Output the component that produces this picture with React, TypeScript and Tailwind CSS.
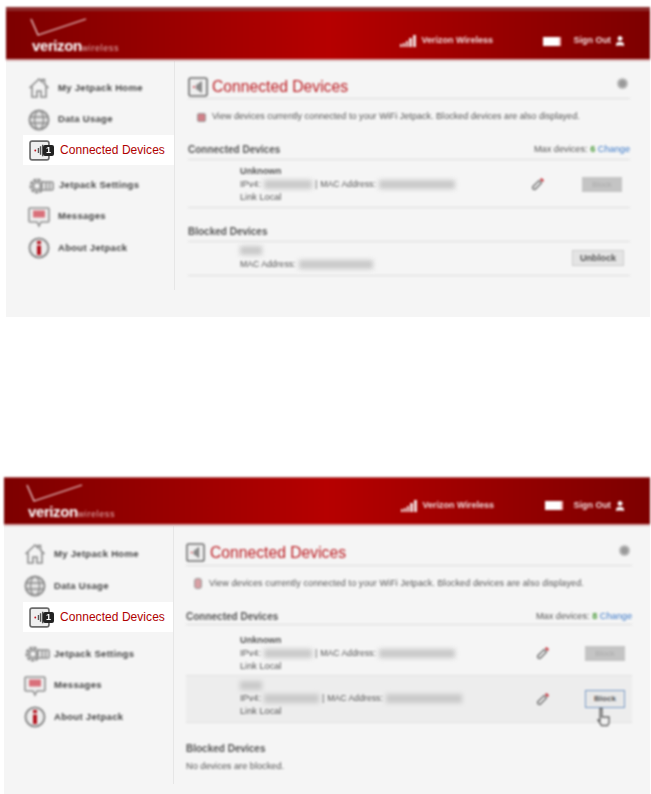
import React from "react";
import { User } from "lucide-react";

const Home = () => (
  <svg width="22" height="22" viewBox="0 0 22 22" fill="#f3f3f3" stroke="#8a8a8a" strokeWidth="1.6">
    <path d="M1.5 11 11 2l3 2.8V2.5h2.5v4.6L20.5 11M4 9.5V20h5v-6h4v6h5V9.5" />
  </svg>
);
const Globe = () => (
  <svg width="22" height="22" viewBox="0 0 22 22" fill="#e4e4e4" stroke="#8c8c8c" strokeWidth="1.4">
    <circle cx="11" cy="11" r="9.5" strokeWidth="2" />
    <ellipse cx="11" cy="11" rx="4.5" ry="9.5" fill="none" />
    <path d="M2 8h18M2 14h18" fill="none" />
  </svg>
);
const Gear = () => (
  <svg width="26" height="20" viewBox="0 0 26 20" fill="none" stroke="#8e8e8e" strokeWidth="1.6">
    <circle cx="9" cy="10" r="6" strokeDasharray="3 1" strokeWidth="3" />
    <circle cx="9" cy="10" r="3.5" fill="#f3f3f3" />
    <rect x="14" y="6" width="11" height="8" rx="1" fill="#f3f3f3" />
    <path d="M18 6v8M21.500 6v8" />
  </svg>
);
const Msg = () => (
  <svg width="22" height="22" viewBox="0 0 22 22">
    <path d="M2 2h18a1 1 0 0 1 1 1v12a1 1 0 0 1-1 1h-7l-2 4-2-4H2a1 1 0 0 1-1-1V3a1 1 0 0 1 1-1Z" fill="#efefef" stroke="#909090" strokeWidth="1.6" />
    <rect x="5" y="4.500" width="12" height="7" fill="#d9707a" />
  </svg>
);
const Info = () => (
  <svg width="22" height="22" viewBox="0 0 22 22">
    <circle cx="11" cy="11" r="9.500" fill="#ececec" stroke="#8a8a8a" strokeWidth="2" />
    <rect x="9" y="4" width="4" height="3" fill="#b3121d" />
    <rect x="9" y="8.500" width="4" height="9.500" fill="#b3121d" />
  </svg>
);
const DeviceIcon = ({ size = 20, wave = "#555" }: { size?: number; wave?: string }) => (
  <svg width={size} height={size} viewBox="0 0 20 20">
    <rect x="1" y="1" width="18" height="18" rx="2" fill="#efefef" stroke="#6b6b6b" strokeWidth="1.6" />
    <circle cx="6" cy="10" r="0.9" fill="#c01420" />
    <path d="M9 7.500v5M11 6v8M13 4.500v11" stroke={wave} strokeWidth="1.300" />
  </svg>
);
const Pencil = () => (
  <svg width="14" height="14" viewBox="0 0 14 14" className="shrink-0">
    <path d="M2 12 1.500 10 8 3.500l2.500 2.500L4 12.500Z" fill="#efefef" stroke="#666" strokeWidth="1.200" />
    <path d="M9 2.500 10.500 1l2.500 2.500L11.500 5Z" fill="#c0202a" />
  </svg>
);
const Logo = () => (
  <div className="flex flex-col">
    <svg width="58" height="22" viewBox="0 0 58 22" fill="none" stroke="#f2d8d8" strokeWidth="1.300">
      <path d="M1 1 8 17 56 1" />
    </svg>
    <div className="flex items-baseline mt-[-2px] ml-[2px] text-white leading-none">
      <span className="text-[15px] font-bold tracking-[-0.4px]">verizon</span>
      <span className="text-[9px] text-[#e6b8b8] tracking-[0.6px]">wireless</span>
    </div>
  </div>
);
const Signal = () => (
  <svg width="17" height="12" viewBox="0 0 17 12" fill="#f0dcdc">
    <rect x="0" y="9" width="2" height="3" />
    <rect x="3" y="8" width="2" height="4" />
    <rect x="6" y="6" width="2" height="6" />
    <rect x="9" y="3" width="3" height="9" />
    <rect x="13" y="0" width="3" height="12" />
  </svg>
);

function Header({ tall }: { tall: boolean }) {
  return (
    <div
      className={`flex items-center justify-between bg-gradient-to-r from-[#7d0000] via-[#b60000] to-[#7d0000] border-b-2 border-[#d9b0b0] text-[#f4dede] blur-[0.8px] ${
        tall ? "h-[54px] border-t-4 border-t-[#8c2a2a] pl-[24px] pr-[24px]" : "h-[49px] border-t border-t-[#b56060] pl-[22px] pr-[24px]"
      }`}
    >
      <Logo />
      <div className={`flex items-center font-semibold ${tall ? "mt-[12px]" : "mt-[9px]"}`}>
        <Signal />
        <span className={`ml-[5px] text-[9px] ${tall ? "w-[121px]" : "w-[122px]"}`}>Verizon Wireless</span>
        <span className={`w-[18px] h-[9px] bg-white border-r-2 border-[#f2b0b0] ${tall ? "mr-[13px]" : "mr-[11px]"}`} />
        <span className="text-[9px]">Sign Out</span>
        <User size={12} fill="#fff" className="ml-[3px] text-white" />
      </div>
    </div>
  );
}

function NavRow({ icon, label, h, pl, gap }: { icon: React.ReactNode; label: string; h: string; pl: string; gap: string }) {
  return (
    <div className={`flex items-center blur-[0.9px] text-[#444] text-[9.500px] font-bold tracking-[0.3px] ${h} ${pl}`}>
      <span className={`flex shrink-0 ${gap}`}>{icon}</span>
      <span>{label}</span>
    </div>
  );
}

function Active({ className }: { className: string }) {
  return (
    <div className={`flex items-center h-[30px] bg-white ${className}`}>
      <div className="relative ml-[6px] w-[20px] h-[21px] blur-[0.4px]">
        <DeviceIcon size={21} />
        <span className="absolute left-[14px] top-[5px] w-[11px] h-[11px] rounded-[2px] bg-[#222] text-white text-[9px] font-bold leading-[11px] text-center">1</span>
      </div>
      <span className="ml-[11px] text-[12px] text-[#b00000] tracking-[0.05px]">Connected Devices</span>
    </div>
  );
}

function Blur({ className }: { className: string }) {
  return <span className={`inline-block h-[9px] bg-[#c9c9c9] blur-[2px] ${className}`} />;
}

function Addr({ ip, mac }: { ip: string; mac: string }) {
  return (
    <div className="flex items-center h-[13px]">
      IPv4:
      <Blur className={`ml-[3px] ${ip}`} />
      <span className="mx-[3px]">|</span>
      <span className="text-[8.700px]">MAC Address:</span>
      <Blur className={`ml-[3px] ${mac}`} />
    </div>
  );
}

const Disabled = () => (
  <span className="block w-[40px] h-[15px] bg-[#c4c4c4] text-[#aaa] text-[8px] leading-[15px] text-center">Block</span>
);

function TopMain() {
  return (
    <div className="flex-1 pl-[13px] pr-[20px] pt-[15px] blur-[0.9px] text-[9.200px] text-[#555]">
      <div className="flex items-center justify-between h-[23px] pb-[1px] border-b border-[#ddd]">
        <div className="flex items-center">
          <DeviceIcon size={20} />
          <span className="ml-[4px] text-[15.700px] text-[#bb1a20]">Connected Devices</span>
        </div>
        <span className="w-[11px] h-[11px] mr-[2px] mt-[-6px] rounded-full bg-[#999] border-2 border-[#bbb]" />
      </div>
      <div className="flex items-center h-[36px] pl-[9px]">
        <span className="w-[9px] h-[9px] rounded-[2px] bg-[#d08088] border border-[#999]" />
        <span className="ml-[6px] text-[9px] tracking-[0.03px]">View devices currently connected to your WiFi Jetpack. Blocked devices are also displayed.</span>
      </div>
      <div className="flex items-end justify-between h-[25px] pb-[2px] border-b border-[#ddd]">
        <span className="font-bold text-[10px] leading-[15px]">Connected Devices</span>
        <span className="leading-[15px]">
          Max devices: <b className="text-[#4a9a3a]">6</b> <span className="text-[#3a78c8]">Change</span>
        </span>
      </div>
      <div className="flex items-center h-[48px] pt-[1px] border-b border-[#ddd]">
        <div className="ml-[52px] w-[291px] leading-[13px]">
          <div className="font-semibold">Unknown</div>
          <Addr ip="w-[48px]" mac="w-[76px]" />
          <div>Link Local</div>
        </div>
        <Pencil />
        <span className="ml-[37px]"><Disabled /></span>
      </div>
      <div className="flex items-end h-[34px] pb-[2px] border-b border-[#ddd] font-bold text-[10px] leading-[15px]">Blocked Devices</div>
      <div className="flex items-center h-[34px] border-b border-[#ddd]">
        <div className="ml-[52px] w-[331px] leading-[13px]">
          <Blur className="w-[22px] block" />
          <div className="flex items-center h-[13px] mt-[-1px]">
            <span className="text-[8.700px]">MAC Address:</span>
            <Blur className="ml-[3px] w-[74px]" />
          </div>
        </div>
        <span className="w-[52px] h-[16px] ml-[1px] mt-[-1px] bg-[#e4e4e4] border border-[#ccc] font-bold text-[#555] leading-[14px] text-center">Unblock</span>
      </div>
    </div>
  );
}

function BottomMain() {
  return (
    <div className="flex-1 pl-[12px] pr-[18px] pt-[18px] blur-[0.9px] text-[9.200px] text-[#555]">
      <div className="flex items-center justify-between h-[22px] border-b border-[#ddd]">
        <div className="flex items-center mb-[4px]">
          <DeviceIcon size={19} />
          <span className="ml-[5px] text-[15.700px] text-[#bb1a20]">Connected Devices</span>
        </div>
        <span className="w-[11px] h-[11px] mr-[2px] mt-[-8px] rounded-full bg-[#999] border-2 border-[#bbb]" />
      </div>
      <div className="flex items-center h-[35px] pl-[8px]">
        <span className="w-[8px] h-[11px] rounded-[3px] bg-[#d8a0a4] border border-[#999]" />
        <span className="ml-[7px] text-[9px] tracking-[0.11px]">View devices currently connected to your WiFi Jetpack. Blocked devices are also displayed.</span>
      </div>
      <div className="flex items-end justify-between h-[24px] border-b border-[#ddd]">
        <span className="font-bold text-[10px] leading-[15px]">Connected Devices</span>
        <span className="leading-[15px]">
          Max devices: <b className="text-[#4a9a3a]">8</b> <span className="text-[#3a78c8]">Change</span>
        </span>
      </div>
      <div className="flex items-center h-[50px] pt-[6px]">
        <div className="ml-[54px] w-[296px] leading-[13px]">
          <div className="font-semibold">Unknown</div>
          <Addr ip="w-[48px]" mac="w-[76px]" />
          <div>Link Local</div>
        </div>
        <Pencil />
        <span className="ml-[35px]"><Disabled /></span>
      </div>
      <div className="flex items-center h-[48px] bg-[#ededed] border-y border-[#e2e2e2]">
        <div className="ml-[54px] w-[296px] leading-[13px]">
          <Blur className="w-[22px] block" />
          <div className="mt-[-2px]">
            <Addr ip="w-[55px]" mac="w-[76px]" />
          </div>
          <div>Link Local</div>
        </div>
        <Pencil />
        <span className="relative ml-[35px] w-[40px] h-[18px] bg-[#e8e8e8] border border-[#7a9cc6] text-[8px] font-bold text-[#555] leading-[16px] text-center">
          Block
          <svg className="absolute left-[11px] top-[16px]" width="15" height="20" viewBox="0 0 15 20" fill="#f0f0f0" stroke="#666" strokeWidth="1.400">
            <path d="M3 1.500h2V10h7v6l-1.500 2.500h-6L1 13l2 .5Z" />
          </svg>
        </span>
      </div>
      <div className="mt-[20px] font-bold text-[10px] leading-[12px]">Blocked Devices</div>
      <div className="mt-[5px] leading-[12px]">No devices are blocked.</div>
    </div>
  );
}

export default function App() {
  return (
    <div className="w-[651px] h-[794px] bg-white font-['Liberation_Sans',sans-serif] overflow-hidden">
      <div className="ml-[6px] mt-[7px] w-[644px] h-[310px] bg-[#f5f5f5]">
        <Header tall />
        <div className="flex h-[256px]">
          <div className="w-[169px] h-[229px] border-r border-[#e6e6e6] pt-[11px] shrink-0">
            <NavRow icon={<Home />} label="My Jetpack Home" h="h-[32px]" pl="pl-[22px]" gap="w-[30px]" />
            <NavRow icon={<Globe />} label="Data Usage" h="h-[31px]" pl="pl-[22px]" gap="w-[30px]" />
            <Active className="ml-[17px]" />
            <div className="h-[5px]" />
            <NavRow icon={<Gear />} label="Jetpack Settings" h="h-[31px]" pl="pl-[22px]" gap="w-[31px]" />
            <NavRow icon={<Msg />} label="Messages" h="h-[31px]" pl="pl-[22px]" gap="w-[30px]" />
            <NavRow icon={<Info />} label="About Jetpack" h="h-[32px]" pl="pl-[22px]" gap="w-[30px]" />
          </div>
          <TopMain />
        </div>
      </div>
      <div className="ml-[4px] mt-[160px] w-[646px] h-[317px] bg-[#f5f5f5]">
        <Header tall={false} />
        <div className="flex h-[268px]">
          <div className="w-[170px] h-[258px] border-r border-[#e6e6e6] pt-[12px] shrink-0">
            <NavRow icon={<Home />} label="My Jetpack Home" h="h-[32px]" pl="pl-[20px]" gap="w-[30px]" />
            <NavRow icon={<Globe />} label="Data Usage" h="h-[32px]" pl="pl-[20px]" gap="w-[30px]" />
            <Active className="ml-[19px]" />
            <div className="h-[6px]" />
            <NavRow icon={<Gear />} label="Jetpack Settings" h="h-[32px]" pl="pl-[20px]" gap="w-[30px]" />
            <NavRow icon={<Msg />} label="Messages" h="h-[31px]" pl="pl-[20px]" gap="w-[30px]" />
            <NavRow icon={<Info />} label="About Jetpack" h="h-[32px]" pl="pl-[20px]" gap="w-[30px]" />
          </div>
          <BottomMain />
        </div>
      </div>
    </div>
  );
}
